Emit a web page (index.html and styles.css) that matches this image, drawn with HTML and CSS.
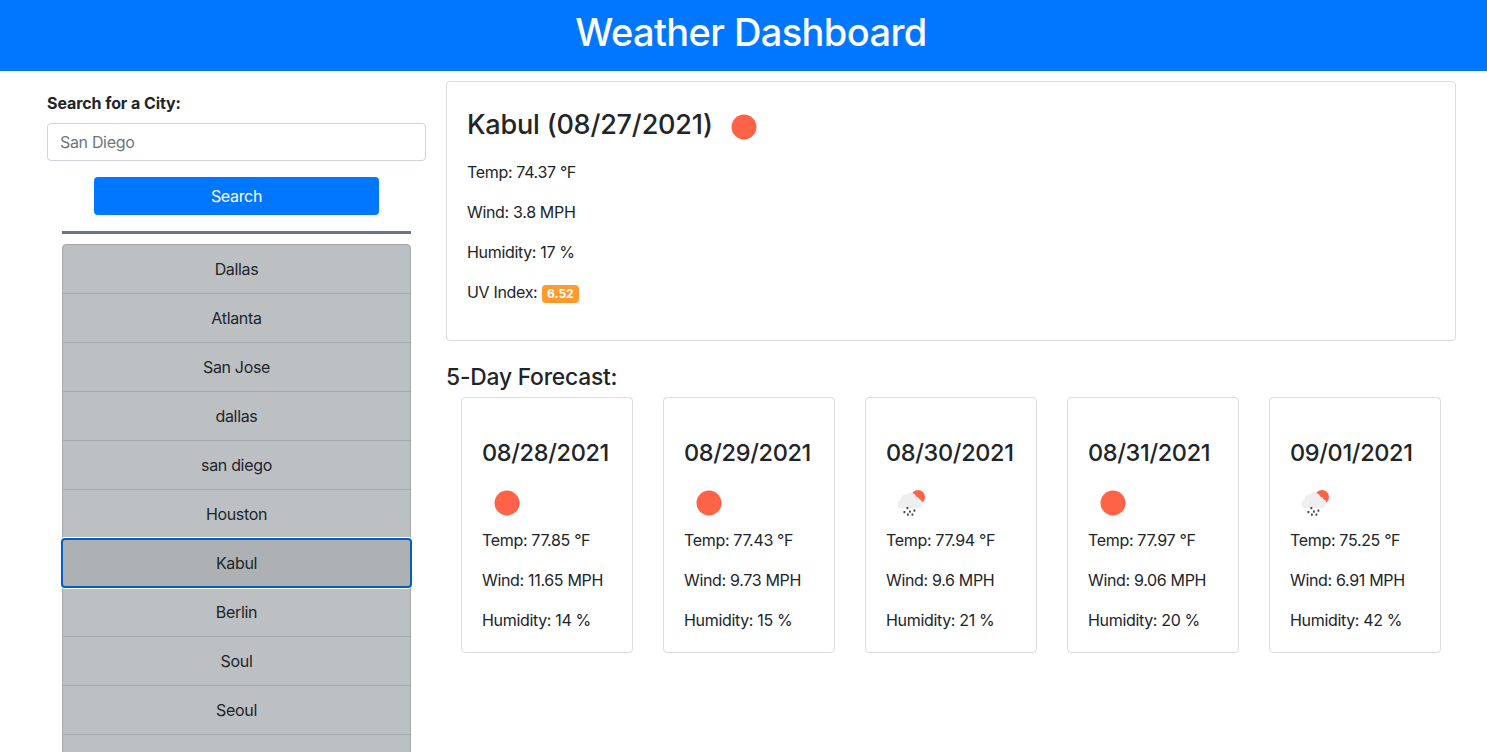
FILE: index.html

```html
<!DOCTYPE html>
<html lang="en">
<head>
  <meta charset="UTF-8" />
  <meta name="viewport" content="width=device-width, initial-scale=1.0" />
  <title>Weather Dashboard</title>
  <link rel="stylesheet" href="styles.css">
</head>
<body>
  <svg class="sprites" aria-hidden="true">
    <symbol id="icon-sun" viewBox="0 0 50 50">
      <circle cx="25" cy="25" r="12.5" fill="#ff6347" />
    </symbol>
    <symbol id="icon-rain" viewBox="0 0 50 50">
      <circle cx="32" cy="19" r="7" fill="#ff6347" />
      <path d="M15.5 30a4 4 0 0 1-.8-7.900 5.500 5.500 0 0 1 6-6.100 6.500 6.500 0 0 1 9.800 2.800 4.500 4.500 0 0 1 3 2.400 4.600 4.600 0 0 1-1.500 8.800z" fill="#efefef" />
      <g fill="#444444">
        <rect x="20.500" y="29" width="1.800" height="2.200" />
        <rect x="17.500" y="33" width="1.800" height="2.200" />
        <rect x="23" y="32.500" width="1.800" height="2.200" />
        <rect x="27.500" y="31.500" width="1.800" height="2.200" />
        <rect x="21" y="35.500" width="1.800" height="2.200" />
        <rect x="25.500" y="35.500" width="1.800" height="2.200" />
      </g>
    </symbol>
  </svg>

  <header class="top-bar">
    <h1>Weather Dashboard</h1>
  </header>

  <div class="layout">
    <aside class="sidebar">
      <label class="search-label" for="city">Search for a City:</label>
      <input class="search-input" id="city" type="text" placeholder="San Diego" />
      <button class="search-btn" type="button">Search</button>
      <hr class="divider" />
      <div class="city-list">
        <button class="city-btn" type="button">Dallas</button>
        <button class="city-btn" type="button">Atlanta</button>
        <button class="city-btn" type="button">San Jose</button>
        <button class="city-btn" type="button">dallas</button>
        <button class="city-btn" type="button">san diego</button>
        <button class="city-btn" type="button">Houston</button>
        <button class="city-btn active" type="button">Kabul</button>
        <button class="city-btn" type="button">Berlin</button>
        <button class="city-btn" type="button">Soul</button>
        <button class="city-btn" type="button">Seoul</button>
        <button class="city-btn" type="button">&nbsp;</button>
      </div>
    </aside>

    <main class="content">
      <section class="current">
        <h2 class="current-title">Kabul (08/27/2021) <svg class="icon"><use href="#icon-sun" /></svg></h2>
        <p>Temp: 74.37 °F</p>
        <p>Wind: 3.8 MPH</p>
        <p>Humidity: 17 %</p>
        <p>UV Index: <span class="badge">6.52</span></p>
      </section>

      <h3 class="forecast-title">5-Day Forecast:</h3>
      <div class="forecast">
        <article class="day">
          <h4>08/28/2021</h4>
          <svg class="icon"><use href="#icon-sun" /></svg>
          <p>Temp: 77.85 °F</p>
          <p>Wind: 11.65 MPH</p>
          <p>Humidity: 14 %</p>
        </article>
        <article class="day">
          <h4>08/29/2021</h4>
          <svg class="icon"><use href="#icon-sun" /></svg>
          <p>Temp: 77.43 °F</p>
          <p>Wind: 9.73 MPH</p>
          <p>Humidity: 15 %</p>
        </article>
        <article class="day">
          <h4>08/30/2021</h4>
          <svg class="icon"><use href="#icon-rain" /></svg>
          <p>Temp: 77.94 °F</p>
          <p>Wind: 9.6 MPH</p>
          <p>Humidity: 21 %</p>
        </article>
        <article class="day">
          <h4>08/31/2021</h4>
          <svg class="icon"><use href="#icon-sun" /></svg>
          <p>Temp: 77.97 °F</p>
          <p>Wind: 9.06 MPH</p>
          <p>Humidity: 20 %</p>
        </article>
        <article class="day">
          <h4>09/01/2021</h4>
          <svg class="icon"><use href="#icon-rain" /></svg>
          <p>Temp: 75.25 °F</p>
          <p>Wind: 6.91 MPH</p>
          <p>Humidity: 42 %</p>
        </article>
      </div>
    </main>
  </div>
</body>
</html>
```

FILE: styles.css

```css
html, body {
  height: 100%;
  overflow: hidden;
}
body {
  margin: 0;
  font-family: Inter, "Liberation Sans", sans-serif;
  font-size: 16px;
  line-height: 24px;
  letter-spacing: -0.33px;
  color: #212529;
  background-color: #ffffff;
}
.sprites {
  display: none;
}
.top-bar {
  height: 71px;
  padding-left: 15px;
  background-color: #0176ff;
  color: #ffffff;
  text-align: center;
}
.top-bar h1 {
  margin: 0;
  font-size: 38px;
  font-weight: 500;
  line-height: 64px;
  letter-spacing: -0.6px;
}
.layout {
  display: flex;
  gap: 20px;
  padding-left: 47px;
  padding-right: 31px;
}
.sidebar {
  width: 379px;
  flex: none;
  display: flex;
  flex-direction: column;
  align-items: center;
  padding-top: 20px;
}
.search-label {
  align-self: flex-start;
  font-size: 16px;
  font-weight: 700;
  line-height: 24px;
  margin-bottom: 8px;
  letter-spacing: -0.08px;
}
.search-input {
  box-sizing: border-box;
  width: 100%;
  height: 38px;
  padding: 6px 12px;
  border: 1px solid #ced4da;
  border-radius: 4px;
  font: inherit;
  letter-spacing: inherit;
}
.search-input::placeholder {
  color: #6c757d;
  opacity: 1;
}
.search-btn {
  width: 285px;
  height: 38px;
  margin-top: 16px;
  border: 0;
  border-radius: 4px;
  background-color: #0176ff;
  color: #ffffff;
  font: inherit;
  letter-spacing: inherit;
}
.divider {
  width: 349px;
  height: 3px;
  margin: 16px 0 10px;
  border: 0;
  background-color: #6c757d;
}
.city-list {
  width: 349px;
  display: flex;
  flex-direction: column;
}
.city-btn {
  box-sizing: border-box;
  flex: none;
  width: 100%;
  height: 50px;
  margin-top: -1px;
  border: 1px solid #a5a9ad;
  background-color: #bcc0c3;
  color: #212529;
  font: inherit;
  letter-spacing: inherit;
}
.city-btn:first-child {
  margin-top: 0;
  border-radius: 4px 4px 0 0;
}
.city-btn.active {
  position: relative;
  z-index: 1;
  background-color: #adb1b4;
  border: 2px solid #0060c4;
  border-radius: 4px;
  box-shadow: 0 0 0 1px #ffffff;
  width: calc(100% + 2px);
  margin-left: -1px;
}
.content {
  flex: 1;
  padding-top: 10px;
}
.content p {
  margin: 0 0 16px;
}
.current {
  box-sizing: border-box;
  height: 260px;
  padding: 20px;
  border: 1px solid #dcdcdc;
  border-radius: 4px;
}
.current-title {
  display: flex;
  align-items: flex-start;
  height: 50px;
  margin: 0 0 8px;
  font-size: 27px;
  font-weight: 500;
  line-height: 46px;
  letter-spacing: -0.2px;
  gap: 6px;
}
.icon {
  display: block;
  width: 50px;
  height: 50px;
}
.badge {
  display: inline-block;
  padding: 0 5.5px;
  border-radius: 4px;
  background-color: #ff9a2e;
  color: #ffffff;
  font-size: 12px;
  font-weight: 700;
  line-height: 18px;
  vertical-align: 0;
  letter-spacing: 0;
}
.forecast-title {
  margin: 21px 0 6px;
  font-size: 22.8px;
  font-weight: 500;
  line-height: 29px;
  letter-spacing: -0.2px;
}
.forecast {
  display: flex;
  gap: 30px;
  padding: 0 15px;
}
.day {
  box-sizing: border-box;
  width: 172px;
  height: 256px;
  padding: 37px 20px 0;
  border: 1px solid #dcdcdc;
  border-radius: 4px;
}
.day h4 {
  margin: 0 0 7px;
  font-size: 23.5px;
  font-weight: 500;
  line-height: 36px;
  letter-spacing: -0.35px;
}
```
